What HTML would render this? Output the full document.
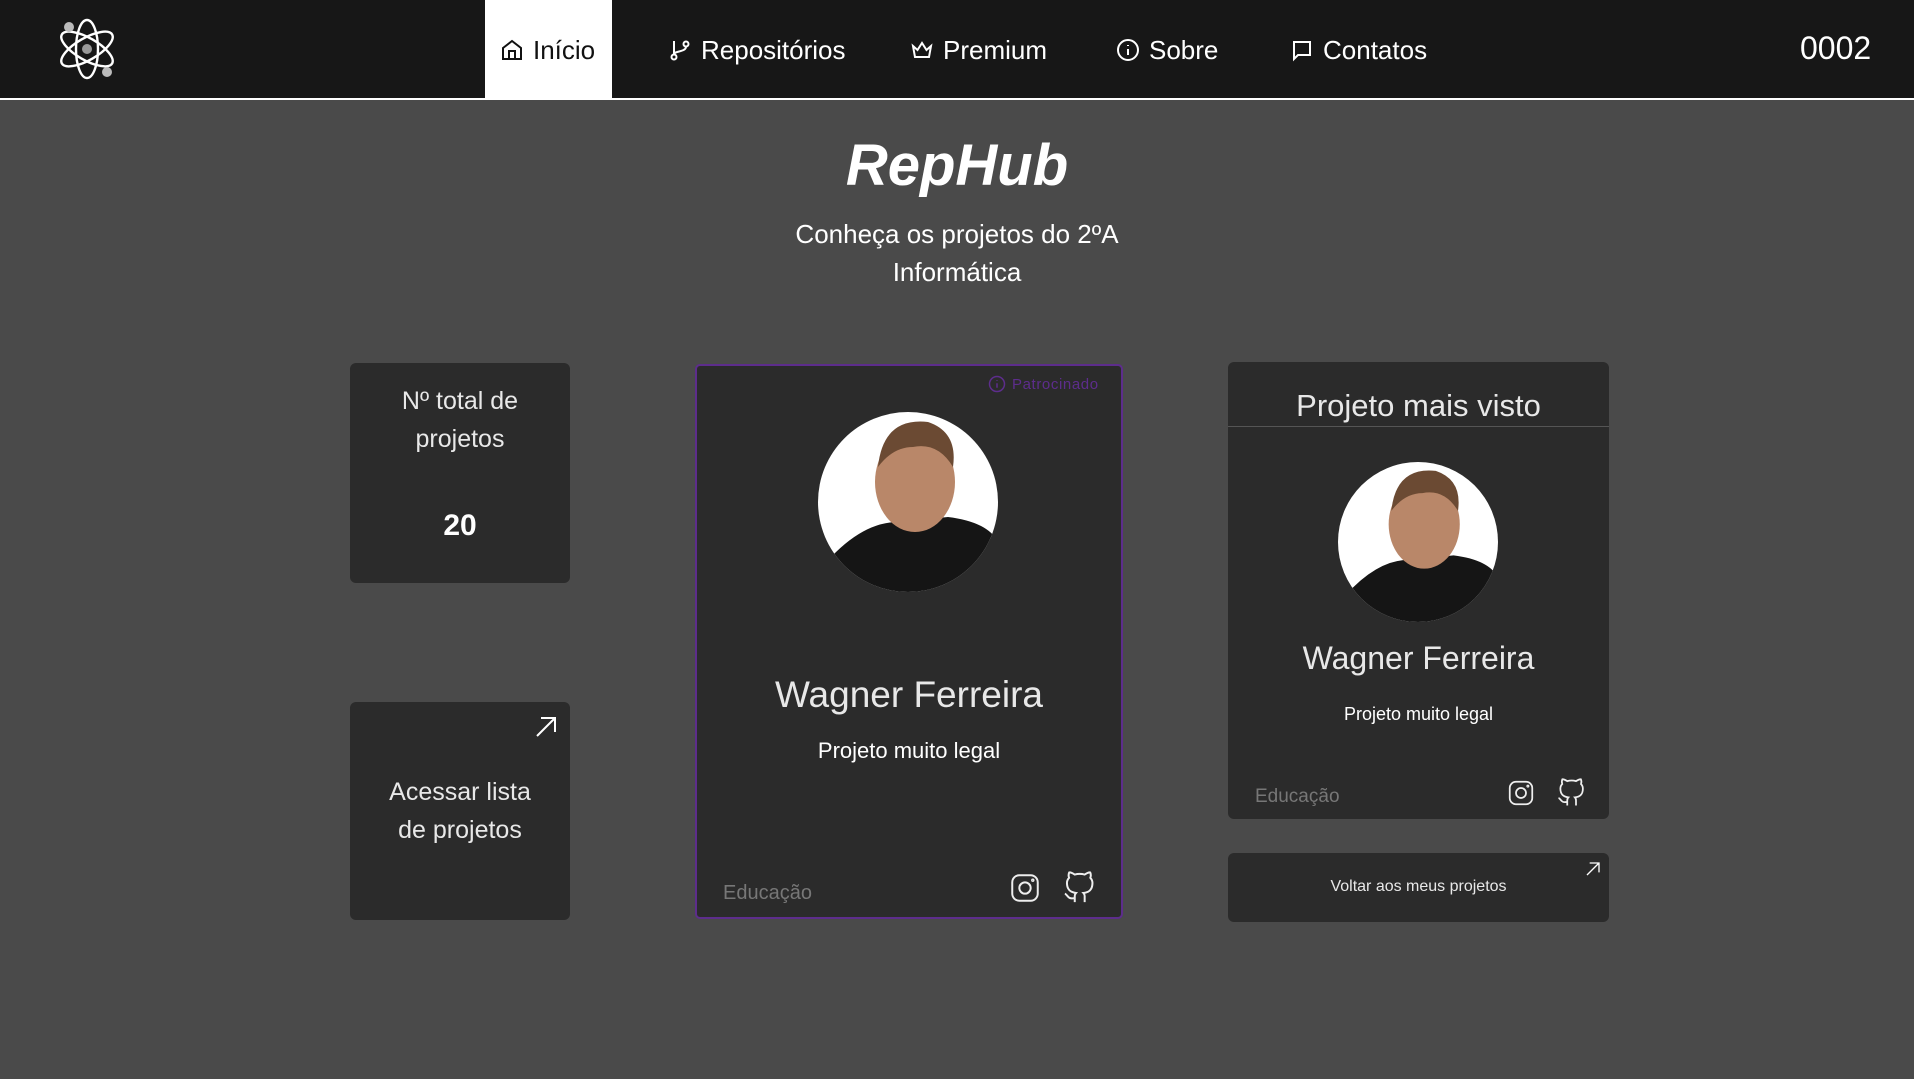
<!DOCTYPE html>
<html><head><meta charset="utf-8"><style>
*{margin:0;padding:0;box-sizing:border-box}
body{width:1914px;height:1079px;background:#4a4a4a;font-family:"Liberation Sans",sans-serif;color:#fff;position:relative;overflow:hidden}
.nav{position:absolute;left:0;top:0;width:1914px;height:100px;background:#171717;border-bottom:2px solid #fff}
.ni{position:absolute;top:0;height:100px;display:flex;align-items:center;font-size:26px;color:#fff;gap:9px}
.ni svg{width:24px;height:24px}
.a{position:absolute}
.card{position:absolute;background:#2b2b2b;border-radius:6px}
.c{text-align:center;width:100%;position:absolute;left:0}
.thin{font-weight:normal;color:#e8e8e8}
</style></head><body>
<div class="nav">
  <svg class="a" style="left:56px;top:17px" width="62" height="64" viewBox="0 0 62 64" fill="none" stroke="#fff" stroke-width="2.4">
    <ellipse cx="31" cy="32" rx="11" ry="29"/>
    <ellipse cx="31" cy="32" rx="11" ry="29" transform="rotate(60 31 32)"/>
    <ellipse cx="31" cy="32" rx="11" ry="29" transform="rotate(-60 31 32)"/>
    <circle cx="31" cy="32" r="5" fill="#999" stroke="none"/>
    <circle cx="13" cy="10" r="5" fill="#bbb" stroke="none"/>
    <circle cx="51" cy="55" r="5" fill="#bbb" stroke="none"/>
  </svg>
  <div class="a" style="left:485px;top:0;width:127px;height:100px;background:#fff"></div>
  <div class="ni" style="left:500px;color:#111"><svg viewBox="0 0 24 24" fill="none" stroke="#111" stroke-width="2"><path d="M3 10l9-7 9 7v11H3z"/><path d="M9 21v-8h6v8"/></svg>Início</div>
  <div class="ni" style="left:668px"><svg viewBox="0 0 24 24" fill="none" stroke="#fff" stroke-width="2"><circle cx="6" cy="19" r="2.5"/><circle cx="18" cy="6" r="2.5"/><path d="M6 3v13.5M18 8.5c0 6-12 4-12 8"/></svg>Repositórios</div>
  <div class="ni" style="left:910px"><svg viewBox="0 0 24 24" fill="none" stroke="#fff" stroke-width="2"><path d="M3 8l4.5 4L12 5l4.5 7L21 8l-2 11H5z"/></svg>Premium</div>
  <div class="ni" style="left:1116px"><svg viewBox="0 0 24 24" fill="none" stroke="#fff" stroke-width="2"><circle cx="12" cy="12" r="10"/><path d="M12 11v6M12 7v1"/></svg>Sobre</div>
  <div class="ni" style="left:1290px"><svg viewBox="0 0 24 24" fill="none" stroke="#fff" stroke-width="2"><path d="M4 4h16v13H8l-4 4z"/></svg>Contatos</div>
  <div class="a" style="left:1800px;top:30px;font-size:32px">0002</div>
</div>

<div class="c" style="top:132px;font-size:58px;font-weight:bold;font-style:italic">RepHub</div>
<div class="c" style="top:215px;font-size:26px;line-height:38px">Conheça os projetos do 2ºA<br>Informática</div>

<div class="card" style="left:350px;top:363px;width:220px;height:220px">
  <div class="c thin" style="top:19px;font-size:25px;line-height:38px">Nº total de<br>projetos</div>
  <div class="c" style="top:146px;font-size:30px;font-weight:bold">20</div>
</div>
<div class="card" style="left:350px;top:702px;width:220px;height:218px">
  <svg class="a" style="left:184px;top:13px" width="24" height="24" viewBox="0 0 24 24" fill="none" stroke="#fff" stroke-width="2"><path d="M3 21L21 3M7 3h14v14"/></svg>
  <div class="c thin" style="top:71px;font-size:25px;line-height:38px">Acessar lista<br>de projetos</div>
</div>

<div class="card" style="left:695px;top:364px;width:428px;height:555px;border:2.5px solid #5d2d8c;border-radius:5px">
  <div class="a" style="left:290px;top:9px;font-size:15px;color:#5d2d8c;display:flex;align-items:center;gap:6px;left:291px;letter-spacing:0.6px"><svg width="18" height="18" viewBox="0 0 24 24" fill="none" stroke="#5d2d8c" stroke-width="2"><circle cx="12" cy="12" r="10"/><path d="M12 11v6M12 7v1"/></svg>Patrocinado</div>
  <svg class="a" style="left:121px;top:46px" width="180" height="180" viewBox="0 0 180 180">
    <defs><clipPath id="k1"><circle cx="90" cy="90" r="90"/></clipPath></defs>
    <g clip-path="url(#k1)"><rect width="180" height="180" fill="#fff"/>
    <path d="M0 160 Q40 110 80 110 L130 105 Q170 110 180 130 L180 180 L0 180z" fill="#151515"/>
    <ellipse cx="97" cy="70" rx="40" ry="50" fill="#b98769"/>
    <path d="M60 55 Q65 5 110 10 Q140 20 135 55 Q120 30 95 35 Q75 35 60 55z" fill="#6b4a33"/></g>
  </svg>
  <div class="c thin" style="top:308px;font-size:37px">Wagner Ferreira</div>
  <div class="c" style="top:372px;font-size:22px">Projeto muito legal</div>
  <div class="a" style="left:26px;top:516px;font-size:20px;color:#777">Educação</div>
  <svg class="a" style="left:311px;top:505px" width="34" height="34" viewBox="0 0 24 24" fill="none" stroke="#eee" stroke-width="1.4"><rect x="3" y="3" width="18" height="18" rx="5"/><circle cx="12" cy="12" r="4"/><circle cx="17.5" cy="6.5" r=".5"/></svg>
  <svg class="a" style="left:365px;top:504px" width="34" height="36" viewBox="0 0 24 24" fill="none" stroke="#eee" stroke-width="1.4"><path d="M9 19c-5 1.5-5-2.5-7-3m14 6v-3.9a3.4 3.4 0 00-.9-2.6c3.1-.3 6.4-1.5 6.4-7A5.4 5.4 0 0020 4.8 5 5 0 0019.9 1S18.7.7 16 2.5a13.4 13.4 0 00-7 0C6.3.7 5.1 1 5.1 1A5 5 0 005 4.8a5.4 5.4 0 00-1.5 3.7c0 5.4 3.3 6.6 6.4 7a3.4 3.4 0 00-.9 2.6V22"/></svg>
</div>

<div class="card" style="left:1228px;top:362px;width:381px;height:457px">
  <div class="c thin" style="top:26px;font-size:31px">Projeto mais visto</div>
  <div class="a" style="left:0;top:64px;width:381px;height:1px;background:#555"></div>
  <svg class="a" style="left:110px;top:100px" width="160" height="160" viewBox="0 0 180 180">
    <defs><clipPath id="k2"><circle cx="90" cy="90" r="90"/></clipPath></defs>
    <g clip-path="url(#k2)"><rect width="180" height="180" fill="#fff"/>
    <path d="M0 160 Q40 110 80 110 L130 105 Q170 110 180 130 L180 180 L0 180z" fill="#151515"/>
    <ellipse cx="97" cy="70" rx="40" ry="50" fill="#b98769"/>
    <path d="M60 55 Q65 5 110 10 Q140 20 135 55 Q120 30 95 35 Q75 35 60 55z" fill="#6b4a33"/></g>
  </svg>
  <div class="c thin" style="top:278px;font-size:32px">Wagner Ferreira</div>
  <div class="c" style="top:342px;font-size:18px">Projeto muito legal</div>
  <div class="a" style="left:27px;top:424px;font-size:19px;color:#777">Educação</div>
  <svg class="a" style="left:278px;top:416px" width="30" height="30" viewBox="0 0 24 24" fill="none" stroke="#eee" stroke-width="1.4"><rect x="3" y="3" width="18" height="18" rx="5"/><circle cx="12" cy="12" r="4"/><circle cx="17.5" cy="6.5" r=".5"/></svg>
  <svg class="a" style="left:328px;top:415px" width="30" height="32" viewBox="0 0 24 24" fill="none" stroke="#eee" stroke-width="1.4"><path d="M9 19c-5 1.5-5-2.5-7-3m14 6v-3.9a3.4 3.4 0 00-.9-2.6c3.1-.3 6.4-1.5 6.4-7A5.4 5.4 0 0020 4.8 5 5 0 0019.9 1S18.7.7 16 2.5a13.4 13.4 0 00-7 0C6.3.7 5.1 1 5.1 1A5 5 0 005 4.8a5.4 5.4 0 00-1.5 3.7c0 5.4 3.3 6.6 6.4 7a3.4 3.4 0 00-.9 2.6V22"/></svg>
</div>

<div class="card" style="left:1228px;top:853px;width:381px;height:69px">
  <svg class="a" style="left:357px;top:8px" width="16" height="16" viewBox="0 0 24 24" fill="none" stroke="#fff" stroke-width="2"><path d="M3 21L21 3M7 3h14v14"/></svg>
  <div class="c thin" style="top:25px;font-size:16px">Voltar aos meus projetos</div>
</div>
</body></html>
